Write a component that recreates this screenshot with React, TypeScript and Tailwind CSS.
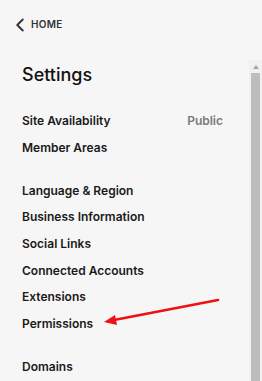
import { ChevronLeft } from 'lucide-react';

const groups = [
  [
    { label: 'Site Availability', value: 'Public' },
    { label: 'Member Areas' },
  ],
  [
    { label: 'Language & Region' },
    { label: 'Business Information' },
    { label: 'Social Links' },
    { label: 'Connected Accounts' },
    { label: 'Extensions' },
    { label: 'Permissions' },
  ],
  [{ label: 'Domains' }],
];

export default function App() {
  return (
    <div
      className="relative flex h-[381px] w-[262px] overflow-hidden bg-[#f6f6f6] text-[#1a1a1a]"
      style={{ fontFamily: 'Inter, "Noto Sans", sans-serif' }}
    >
      <div className="flex-1 pl-[22px] pr-[26px]">
        <div className="-ml-[13px] flex h-[48px] items-center pt-[1px] text-[#333]">
          <ChevronLeft size={22} strokeWidth={2.1} />
          <span className="text-[10px] font-semibold tracking-[0.3px]">HOME</span>
        </div>
        <h1 className="mt-[15px] text-[18px] font-medium leading-[24px] text-[#111]">Settings</h1>

        <div className="mt-[21px] flex flex-col gap-[16px]">
          {groups.map((group, i) => (
            <div key={i} className="flex flex-col">
              {group.map((item) => (
                <div key={item.label} className="flex h-[26.7px] items-center justify-between">
                  <span className="text-[12px] font-semibold">{item.label}</span>
                  {item.value && (
                    <span className="text-[12px] font-semibold text-[#7a7a7a]">{item.value}</span>
                  )}
                </div>
              ))}
            </div>
          ))}
        </div>
      </div>

      {/* scrollbar */}
      <div className="mt-[60px] flex w-[13px] flex-col bg-[#f1f1f1]">
        <div className="flex h-[13px] items-center justify-center">
          <div className="h-0 w-0 border-x-[3px] border-b-[4px] border-x-transparent border-b-[#a3a3a3]" />
        </div>
        <div className="ml-[2px] mr-[2px] flex-1 bg-[#bdbdbd]" />
      </div>

      {/* annotation arrow */}
      <svg className="absolute left-0 top-0" width="262" height="381">
        <line x1="218" y1="300" x2="114" y2="320" stroke="#ee1111" strokeWidth="2.6" strokeLinecap="round" />
        <polygon points="104,322 115,315 117,325" fill="#ee1111" />
      </svg>
    </div>
  );
}
